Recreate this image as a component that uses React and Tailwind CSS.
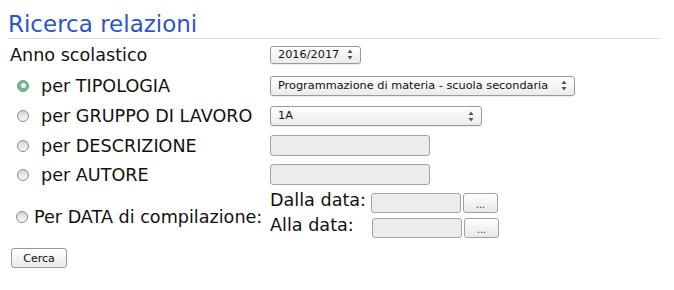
import React from 'react';

function Radio({ checked }) {
  if (checked) {
    return (
      <span className="flex items-center justify-center w-[12px] h-[12px] rounded-full border border-[#7f9a88] bg-[#6fb98a] shrink-0">
        <span className="w-[5px] h-[5px] rounded-full bg-[#eef4ef]" />
      </span>
    );
  }
  return (
    <span className="block w-[12px] h-[12px] rounded-full border border-[#8a8a8a] bg-linear-to-b from-[#d4d4d4] to-[#fafafa] shrink-0" />
  );
}

function Arrows() {
  return (
    <svg width="6" height="11" viewBox="0 0 6 11" className="shrink-0">
      <path d="M3 0.5 L5.5 4 L0.5 4 Z" fill="#555" />
      <path d="M3 10.5 L5.5 7 L0.5 7 Z" fill="#555" />
    </svg>
  );
}

function Select({ value, width, height = 20 }) {
  return (
    <div
      className="flex items-center justify-between pl-[7px] pr-[7px] border border-[#9a9a9a] rounded-[3px] bg-linear-to-b from-white to-[#ebebeb] text-[11.3px] leading-none whitespace-nowrap shadow-[0_1px_1px_rgba(0,0,0,0.08)]"
      style={{ width, height }}
    >
      <span>{value}</span>
      <Arrows />
    </div>
  );
}

function TextBox({ width, height }) {
  return (
    <div
      className="border border-[#a3a3a3] rounded-[3px] bg-[#ececec] shrink-0"
      style={{ width, height }}
    />
  );
}

function DotsButton() {
  return (
    <div className="w-[35px] h-[20px] flex items-center justify-center border border-[#a0a0a0] rounded-[3px] bg-linear-to-b from-white to-[#e9e9e9] text-[10px] leading-none text-[#334] pt-[3px] shrink-0">
      ...
    </div>
  );
}

export default function App() {
  return (
    <div className="w-[674px] h-[290px] bg-white text-[#111] font-['DejaVu_Sans',sans-serif]">
      <div className="pl-[8px] pr-[13px] pt-[11px]">
        <h1 className="text-[23px] leading-[27px] text-[#2f54c9] border-b border-[#dddddd]">
          Ricerca relazioni
        </h1>

        <div className="text-[17.6px] leading-[20px]">
          <div className="flex items-center h-[31px]">
            <div className="w-[262px] pl-[2px]">Anno scolastico</div>
            <Select value="2016/2017" width={91} height={18} />
          </div>

          <div className="flex items-center h-[31px]">
            <div className="w-[262px] flex items-center">
              <span className="ml-[9px] mr-[12px]"><Radio checked /></span>
              per TIPOLOGIA
            </div>
            <Select value="Programmazione di materia - scuola secondaria" width={305} />
          </div>

          <div className="flex items-center h-[30px]">
            <div className="w-[262px] flex items-center">
              <span className="ml-[9px] mr-[12px]"><Radio /></span>
              per GRUPPO DI LAVORO
            </div>
            <Select value="1A" width={212} />
          </div>

          <div className="flex items-center h-[29px]">
            <div className="w-[262px] flex items-center">
              <span className="ml-[9px] mr-[12px]"><Radio /></span>
              per DESCRIZIONE
            </div>
            <TextBox width={160} height={21} />
          </div>

          <div className="flex items-center h-[29px]">
            <div className="w-[262px] flex items-center">
              <span className="ml-[9px] mr-[12px]"><Radio /></span>
              per AUTORE
            </div>
            <TextBox width={160} height={21} />
          </div>

          <div className="flex items-center pt-[4px] pb-[2px]">
            <div className="w-[262px] flex items-center pt-[2px] whitespace-nowrap">
              <span className="ml-[8px] mr-[6px]"><Radio /></span>
              Per DATA di compilazione:
            </div>
            <div className="flex flex-col gap-[5px]">
              <div className="flex items-center gap-[2px] h-[20px]">
                <span className="w-[99px] mb-[6px] whitespace-nowrap">Dalla data:</span>
                <TextBox width={90} height={20} />
                <DotsButton />
              </div>
              <div className="flex items-center gap-[2px] h-[20px]">
                <span className="w-[100px] mb-[6px] whitespace-nowrap">Alla data:</span>
                <TextBox width={90} height={20} />
                <DotsButton />
              </div>
            </div>
          </div>
        </div>

        <button className="mt-[8px] ml-[3px] w-[56px] h-[20px] flex items-center justify-center border border-[#9a9a9a] rounded-[3px] bg-linear-to-b from-white to-[#e9e9e9] text-[11px] leading-none">
          Cerca
        </button>
      </div>
    </div>
  );
}
